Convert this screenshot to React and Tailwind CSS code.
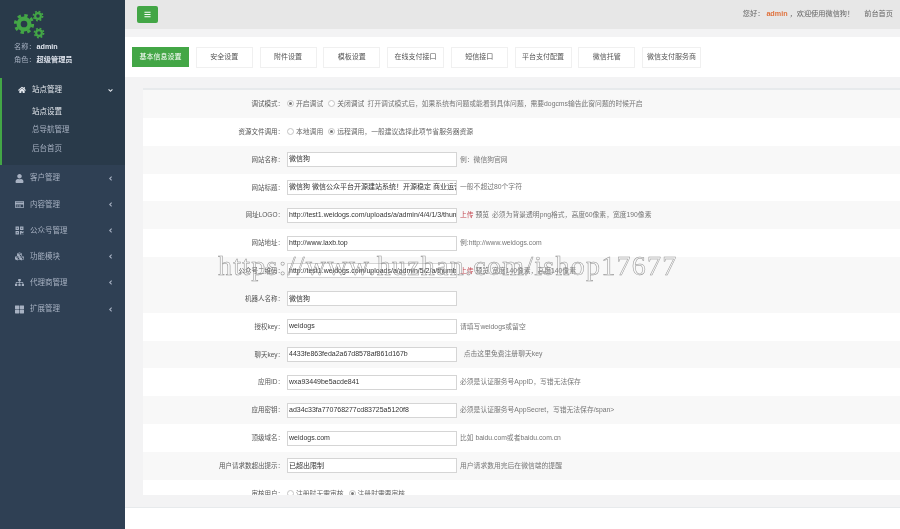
import React from 'react'
import {
  FaHome, FaUser, FaRegCreditCard, FaQrcode, FaCubes, FaSitemap, FaThLarge,
  FaAngleDown, FaAngleLeft, FaBars,
} from 'react-icons/fa'

const menu = [
  { label: '客户管理', icon: FaUser },
  { label: '内容管理', icon: FaRegCreditCard },
  { label: '公众号管理', icon: FaQrcode },
  { label: '功能模块', icon: FaCubes },
  { label: '代理商管理', icon: FaSitemap },
  { label: '扩展管理', icon: FaThLarge },
]

const tabs = ['安全设置', '附件设置', '模板设置', '在线支付接口', '短信接口', '平台支付配置', '微信托管', '微信支付服务商']

const rows = [
  { label: '调试模式：', radios: [['开启调试', true], ['关闭调试', false]], help: '打开调试模式后，如果系统有问题或能看到具体问题，需要dogcms输告此窗问题的时候开启', gray: true },
  { label: '资源文件调用：', radios: [['本地调用', false], ['远程调用，一般建议选择此项节省服务器资源', true]] },
  { label: '网站名称：', value: '微信狗', help: '例：微信狗官网', gray: true },
  { label: '网站标题：', value: '微信狗 微信公众平台开源建站系统！开源稳定 商业运营', help: '一般不超过80个字符' },
  { label: '网址LOGO：', value: 'http://test1.weidogs.com/uploads/a/admin/4/4/1/3/thumb', upload: true, help: '必须为背景透明png格式，高度60像素，宽度190像素', gray: true },
  { label: '网站地址：', value: 'http://www.laxb.top', help: '例:http://www.weidogs.com' },
  { label: '公众号二维码：', value: 'http://test1.weidogs.com/uploads/a/admin/5/2/a/thumb', upload: true, help: '宽度140像素，高度140像素', gray: true },
  { label: '机器人名称：', value: '微信狗', gray: true },
  { label: '授权key：', value: 'weidogs', help: '请填写weidogs或留空' },
  { label: '聊天key：', value: '4433fe863feda2a67d8578af861d167b', help: '  点击这里免费注册聊天key', gray: true },
  { label: '应用ID：', value: 'wxa93449be5acde841', help: '必须是认证服务号AppID，写错无法保存' },
  { label: '应用密钥：', value: 'ad34c33fa770768277cd83725a5120f8', help: '必须是认证服务号AppSecret，写错无法保存/span>', gray: true },
  { label: '顶级域名：', value: 'weidogs.com', help: '比如 baidu.com或者baidu.com.cn' },
  { label: '用户请求数超出提示：', value: '已超出限制', help: '用户请求数用完后在微信端的提醒', gray: true },
  { label: '审核用户：', radios: [['注册时无需审核', false], ['注册时需要审核', true]] },
]

function Gear({ cx, cy, r }) {
  const teeth = 2 * Math.PI * r * 1.15
  return (
    <g fill="none" stroke="#43a646">
      <circle cx={cx} cy={cy} r={r * 0.72} strokeWidth={r * 0.55} />
      <circle cx={cx} cy={cy} r={r * 1.15} strokeWidth={r * 0.4} strokeDasharray={`${teeth / 16} ${teeth / 16}`} />
    </g>
  )
}

function Radio({ on }) {
  return (
    <span className="flex h-[7px] w-[7px] shrink-0 items-center justify-center rounded-full border border-[#c4c4c4] bg-white">
      {on && <span className="h-[3px] w-[3px] rounded-full bg-[#777]" />}
    </span>
  )
}

function Row({ row }) {
  return (
    <div className={`flex h-[27.85px] shrink-0 items-center ${row.gray ? 'bg-[#f8f8f8]' : 'bg-white'}`}>
      <div className="w-[141px] shrink-0 text-right text-[6.5px] text-[#555]">{row.label}</div>
      {row.value !== undefined && (
        <div className="ml-[3px] flex h-[15px] w-[170px] shrink-0 items-center overflow-hidden whitespace-nowrap border border-[#d5d5d5] bg-white pl-[1px] text-[7px] text-[#333]">
          {row.value}
        </div>
      )}
      {row.radios && (
        <div className="ml-[3px] flex items-center gap-[5px] whitespace-nowrap text-[#666]">
          {row.radios.map(([text, on]) => (
            <span key={text} className="flex items-center gap-[2px]">
              <Radio on={on} />
              {text}
            </span>
          ))}
        </div>
      )}
      {row.upload && (
        <span className="ml-[3px] whitespace-nowrap text-[#666]">
          <span className="text-[#c2454f]">上传</span> 预览
        </span>
      )}
      {row.help && <div className="ml-[3px] whitespace-pre text-[#777]">{row.help}</div>}
    </div>
  )
}

export default function App() {
  return (
    <div className="relative flex h-[529px] w-[900px] overflow-hidden bg-white text-[6.8px] blur-[0.35px] [font-family:'Liberation_Sans','Noto_Sans_CJK_SC',sans-serif]">
      {/* Sidebar */}
      <aside className="flex w-[125px] shrink-0 flex-col bg-[#2f4054] text-[7.5px] text-[#a7b1c2]">
        <div className="h-[78px] bg-[#293a4a] pl-[14px] pt-[10px] text-[7.2px]">
          <svg width="32" height="30" viewBox="0 0 32 30">
            <Gear cx={10} cy={14} r={7.5} />
            <Gear cx={24} cy={6} r={4} />
            <Gear cx={25} cy={23} r={4} />
          </svg>
          <div className="mt-[1px] flex h-[13px] items-center">
            <span>名称：</span>
            <span className="ml-[1px] font-bold text-[#dfe4ed]">admin</span>
          </div>
          <div className="flex h-[13px] items-center">
            <span>角色：</span>
            <span className="ml-[1px] font-bold text-[#dfe4ed]">超级管理员</span>
          </div>
        </div>

        <div className="h-[87px] border-l-2 border-[#43a646] bg-[#293a4a]">
          <div className="flex h-[24px] items-center pl-[16px] pr-[11px] text-[#e4e8ee]">
            <FaHome className="h-[8px] w-[8px]" />
            <span className="ml-[6px] flex-1">站点管理</span>
            <FaAngleDown className="h-[7px] w-[7px]" />
          </div>
          <div className="flex h-[19px] items-center pl-[30px] text-[#e4e8ee]">站点设置</div>
          <div className="flex h-[18px] items-center pl-[30px]">总导航管理</div>
          <div className="flex h-[19px] items-center pl-[30px]">后台首页</div>
        </div>

        <div>
          {menu.map((item) => (
            <div key={item.label} className="flex h-[26.2px] items-center pl-[15px] pr-[11px]">
              <item.icon className="h-[9px] w-[9px]" />
              <span className="ml-[6px] flex-1">{item.label}</span>
              <FaAngleLeft className="h-[7px] w-[7px]" />
            </div>
          ))}
        </div>
      </aside>

      {/* Main */}
      <main className="flex min-w-0 flex-1 flex-col bg-[#f3f3f4]">
        <header className="flex h-[29px] shrink-0 items-center bg-[#e7e7e7] pl-[12px] pr-[7px] text-[7.2px] text-[#666]">
          <button className="flex h-[17px] w-[21px] items-center justify-center rounded-[2px] bg-[#43a646] text-white">
            <FaBars className="h-[7px] w-[7px]" />
          </button>
          <div className="ml-auto whitespace-nowrap">
            您好： <span className="font-bold text-[#e0733f]">admin</span> ，欢迎使用微信狗！
          </div>
          <div className="ml-[10px] whitespace-nowrap">前台首页</div>
        </header>

        <div className="mt-[8px] flex h-[40px] shrink-0 items-center gap-[6.75px] bg-white pl-[7px] text-[7px]">
          <div className="flex h-[20px] w-[57px] items-center justify-center bg-[#43a646] text-white">基本信息设置</div>
          {tabs.map((tab) => (
            <div key={tab} className="flex h-[21px] w-[57px] items-center justify-center whitespace-nowrap border border-[#f0f0f0] bg-white text-[#555] last:w-[59px]">
              {tab}
            </div>
          ))}
        </div>

        <div className="ml-[18px] mt-[11px] flex h-[407px] shrink-0 flex-col overflow-hidden border-t-2 border-[#e7eaec] bg-white">
          {rows.map((row) => (
            <Row key={row.label} row={row} />
          ))}
        </div>

        <div className="h-[13px] shrink-0 border-b border-[#e7eaec] bg-[#f3f3f4]" />
        <div className="flex-1 bg-white" />
      </main>

      {/* Watermark */}
      <div className="pointer-events-none absolute left-[218px] top-[248px] whitespace-nowrap text-[28px] leading-[36px] tracking-[1.25px] text-transparent [-webkit-text-stroke:0.5px_#909090] [font-family:'Liberation_Serif',serif]">
        https://www.huzhan.com/ishop17677
      </div>
    </div>
  )
}
